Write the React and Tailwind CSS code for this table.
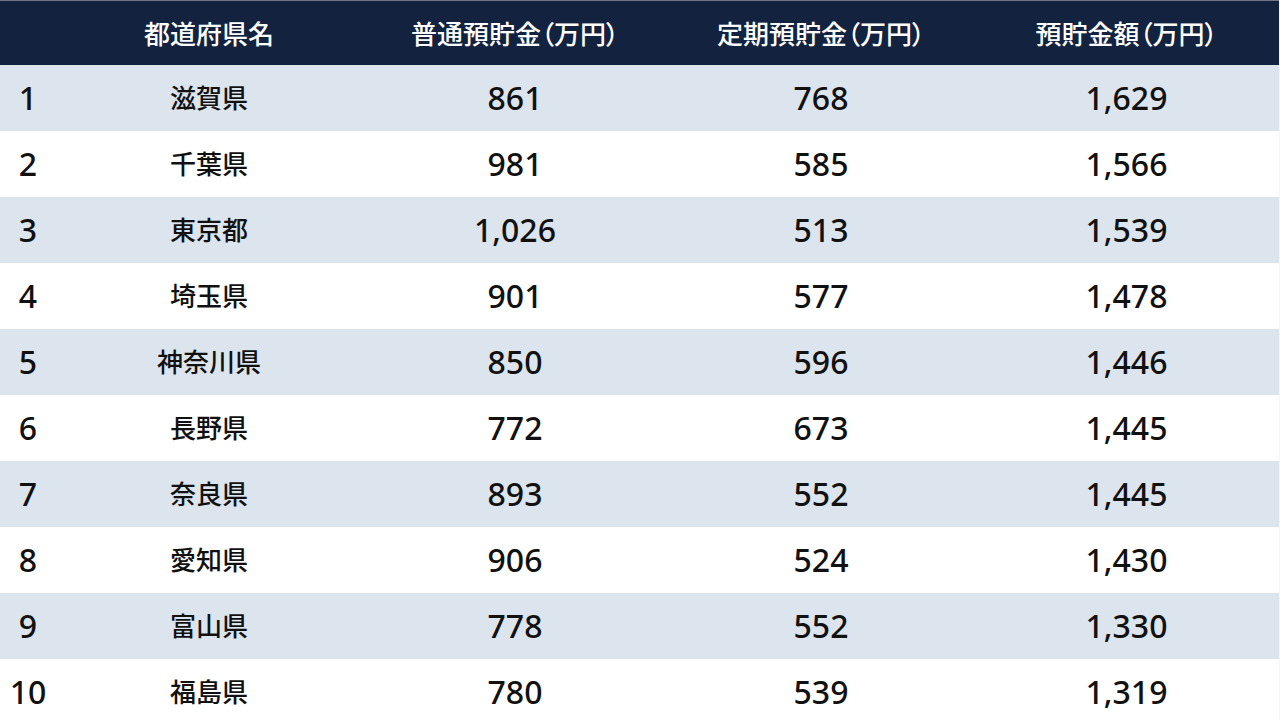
import React from "react";

const rows = [
  ["1", "滋賀県", "861", "768", "1,629"],
  ["2", "千葉県", "981", "585", "1,566"],
  ["3", "東京都", "1,026", "513", "1,539"],
  ["4", "埼玉県", "901", "577", "1,478"],
  ["5", "神奈川県", "850", "596", "1,446"],
  ["6", "長野県", "772", "673", "1,445"],
  ["7", "奈良県", "893", "552", "1,445"],
  ["8", "愛知県", "906", "524", "1,430"],
  ["9", "富山県", "778", "552", "1,330"],
  ["10", "福島県", "780", "539", "1,319"],
];

const font = { fontFamily: '"Noto Sans", "Noto Sans CJK JP", sans-serif' };

export default function App() {
  return (
    <div className="w-[1280px] h-[720px] overflow-hidden bg-white border-r border-[#f4f6f9]" style={font}>
      <div className="grid grid-cols-[56px_306px_306px_306px_305px] h-[65px] pt-[3px] bg-[#13233f] border-t border-[#6f7785] items-center text-white text-[26px] font-medium [font-feature-settings:'palt']">
        <div></div>
        <div className="text-center">都道府県名</div>
        <div className="text-center">普通預貯金（万円）</div>
        <div className="text-center">定期預貯金（万円）</div>
        <div className="text-center">預貯金額（万円）</div>
      </div>
      {rows.map((r, i) => (
        <div
          key={i}
          className={`grid grid-cols-[56px_306px_306px_306px_305px] h-[66px] items-center text-[#111] font-medium ${i % 2 === 0 ? "bg-[#dce4ee]" : "bg-white"}`}
        >
          <div className="text-center text-[32px] leading-none">{r[0]}</div>
          <div className="text-center text-[26px] leading-none">{r[1]}</div>
          <div className="text-center text-[32px] leading-none">{r[2]}</div>
          <div className="text-center text-[32px] leading-none">{r[3]}</div>
          <div className="text-center text-[32px] leading-none">{r[4]}</div>
        </div>
      ))}
    </div>
  );
}
